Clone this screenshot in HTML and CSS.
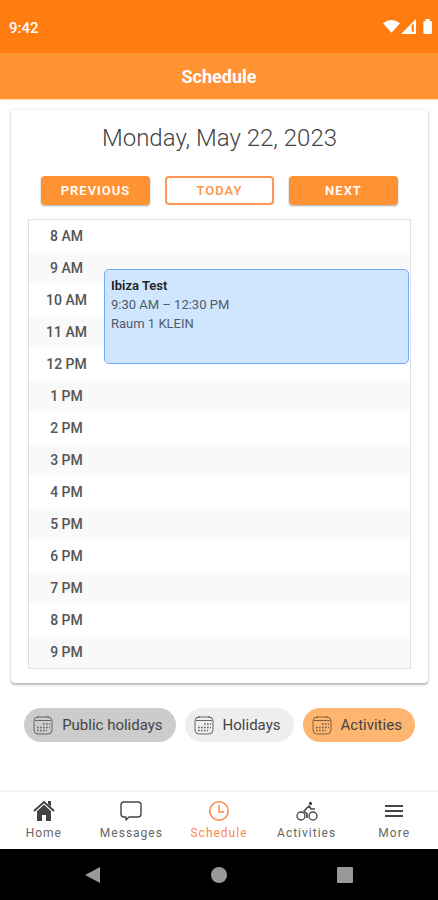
FILE: index.html
```html
<!DOCTYPE html>
<html lang="en">
<head>
<meta charset="utf-8">
<meta name="viewport" content="width=device-width, initial-scale=1">
<title>Schedule</title>
<link rel="stylesheet" href="styles.css">
</head>
<body>
<svg class="defs" aria-hidden="true">
  <symbol id="calendar" viewBox="0 0 20 20">
    <rect x="1" y="2" width="18" height="17" rx="4" fill="none" stroke="currentColor"/>
    <path d="M2 5.500h16M5 1v2M15 1v2" fill="none" stroke="currentColor"/>
    <path d="M10 9h7M4 12.500h13M4 15.500h10" fill="none" stroke="currentColor" stroke-width="1.500" stroke-dasharray="1.700 1.300"/>
  </symbol>
</svg>
<div class="status">
  <time>9:42</time>
  <svg class="signals" viewBox="0 0 48 16" aria-hidden="true">
    <path d="M0 4Q8-2 16 4L8 13Z" fill="#fff"/>
    <path d="M17 14L31 0V14Z" fill="#fff"/>
    <path d="M27 6l2-2v8h-2z" fill="#ff7c10"/>
    <path d="M38 2h2V0h4v2h2v11q0 1-1 1h-6q-1 0-1-1z" fill="#fff"/>
  </svg>
</div>
<header class="toolbar"><h1>Schedule</h1></header>
<main class="content">
  <section class="card">
    <h2>Monday, May 22, 2023</h2>
    <div class="actions">
      <button type="button">PREVIOUS</button>
      <button type="button" class="outline">TODAY</button>
      <button type="button">NEXT</button>
    </div>
    <div class="calendar">
      <table>
        <tbody>
          <tr><th scope="row">8 AM</th><td></td></tr>
          <tr><th scope="row">9 AM</th><td></td></tr>
          <tr><th scope="row">10 AM</th><td></td></tr>
          <tr><th scope="row">11 AM</th><td></td></tr>
          <tr><th scope="row">12 PM</th><td></td></tr>
          <tr><th scope="row">1 PM</th><td></td></tr>
          <tr><th scope="row">2 PM</th><td></td></tr>
          <tr><th scope="row">3 PM</th><td></td></tr>
          <tr><th scope="row">4 PM</th><td></td></tr>
          <tr><th scope="row">5 PM</th><td></td></tr>
          <tr><th scope="row">6 PM</th><td></td></tr>
          <tr><th scope="row">7 PM</th><td></td></tr>
          <tr><th scope="row">8 PM</th><td></td></tr>
          <tr><th scope="row">9 PM</th><td></td></tr>
        </tbody>
      </table>
      <article class="event">
        <h3>Ibiza Test</h3>
        <p>9:30 AM – 12:30 PM</p>
        <p>Raum 1 KLEIN</p>
      </article>
    </div>
  </section>
  <div class="chips">
    <button type="button" class="chip public"><svg aria-hidden="true"><use href="#calendar"/></svg>Public holidays</button>
    <button type="button" class="chip"><svg aria-hidden="true"><use href="#calendar"/></svg>Holidays</button>
    <button type="button" class="chip activities"><svg aria-hidden="true"><use href="#calendar"/></svg>Activities</button>
  </div>
</main>
<nav class="tabs">
  <a href="#home">
    <svg viewBox="0 0 22 22" aria-hidden="true">
      <path d="M4 11l7-7 7 7v10h-5v-6H9v6H4z" fill="currentColor"/>
      <path d="M1 11L11 2l10 9" fill="none" stroke="#fff" stroke-width="4"/>
      <path d="M15 1h3v6l-3-3z" fill="currentColor"/>
      <path d="M1 11L11 2l10 9" fill="none" stroke="currentColor" stroke-width="2"/>
    </svg>Home</a>
  <a href="#messages">
    <svg viewBox="0 0 22 22" aria-hidden="true">
      <path d="M4 2h14q3 0 3 3v9q0 3-3 3H9l-3 3v-3H4q-3 0-3-3V5q0-3 3-3z" fill="none" stroke="currentColor" stroke-width="1.4" stroke-linejoin="round"/>
    </svg>Messages</a>
  <a href="#schedule" class="active" aria-current="page">
    <svg viewBox="0 0 22 22" aria-hidden="true">
      <circle cx="11" cy="11" r="9.2" fill="none" stroke="currentColor" stroke-width="1.5"/>
      <path d="M11 5v7h5" fill="none" stroke="currentColor" stroke-width="1.4"/>
    </svg>Schedule</a>
  <a href="#activities">
    <svg viewBox="0 0 22 22" aria-hidden="true">
      <g fill="none" stroke="currentColor">
        <circle cx="5" cy="16" r="4" stroke-width="1.3"/>
        <circle cx="17" cy="16" r="4" stroke-width="1.3"/>
        <path d="M11 18v-4l-3-3 5-5 2 3h4" stroke-width="1.6" stroke-linejoin="round"/>
      </g>
      <circle cx="14.500" cy="3.500" r="1.700" fill="currentColor"/>
    </svg>Activities</a>
  <a href="#more">
    <svg viewBox="0 0 22 22" aria-hidden="true">
      <path d="M2 6h18M2 11h18M2 16h18" stroke="currentColor" stroke-width="2"/>
    </svg>More</a>
</nav>
<div class="system">
  <button type="button" aria-label="Back"><svg viewBox="0 0 18 18"><path d="M1 9L16 1v16z"/></svg></button>
  <button type="button" aria-label="Home screen"><svg viewBox="0 0 18 18"><circle cx="9" cy="9" r="8"/></svg></button>
  <button type="button" aria-label="Recent apps"><svg viewBox="0 0 18 18"><rect x="1" y="1" width="16" height="16" rx="1"/></svg></button>
</div>
</body>
</html>
```
FILE: styles.css
```css
* { box-sizing: border-box; }

body {
  display: flex;
  flex-direction: column;
  min-height: 100vh;
  margin: 0;
  background: #fff;
  color: #444;
  font-family: Roboto, sans-serif;
}

h1, h2, h3, p { margin: 0; }
button { border: 0; font-family: inherit; }
.defs { display: none; }

.status {
  display: flex;
  align-items: center;
  justify-content: space-between;
  height: 53px;
  padding: 2px 4px 0 9px;
  background: #ff7c10;
  color: #fff;
  font-size: 15px;
  font-weight: 500;
}
.signals { width: 51px; height: 17px; }

.toolbar {
  display: flex;
  align-items: center;
  justify-content: center;
  height: 46px;
  background: #ff9233;
  color: #fff;
  box-shadow: 0 1px 1px #ffdcbc;
}
.toolbar h1 { font-size: 18px; font-weight: 700; }

.content { flex: 1; padding: 11px 10px 0 11px; }

.card {
  padding: 12px 17px 14px;
  border-radius: 0 0 4px 4px;
  box-shadow: 0 2px 2px #bbb, 0 0 3px #ddd;
}
.card h2 {
  color: #444;
  font-size: 24px;
  font-weight: 300;
  line-height: 32px;
  text-align: center;
}

.actions {
  display: grid;
  grid-template-columns: repeat(3, 1fr);
  gap: 15px;
  padding: 22px 13px 14px;
}
.actions button {
  height: 29px;
  padding: 0;
  border-radius: 4px;
  background: #ff9233;
  box-shadow: 0 1px 2px #aaa;
  color: #fff;
  font-size: 13px;
  font-weight: 600;
  letter-spacing: 1px;
}
.actions .outline {
  border: 2px solid #ff9654;
  background: #fff;
  box-shadow: none;
  color: #ff9654;
}

.calendar { position: relative; border: 1px solid #e0e0e0; }
.calendar table { width: 100%; border-collapse: collapse; }
.calendar tr:nth-child(even) { background: #f9f9f9; }
.calendar th, .calendar td { height: 32px; padding: 0; }
.calendar th {
  width: 75px;
  color: #555;
  font-size: 14px;
  font-weight: 500;
  line-height: 32px;
}

.event {
  position: absolute;
  top: 49px;
  right: 1px;
  left: 75px;
  height: 95px;
  padding: 6px;
  border: 1px solid #6faaff;
  border-radius: 5px;
  background: #d0e6ff;
  color: #505b68;
  font-size: 13px;
  line-height: 19px;
}
.event h3 { color: #222; font-size: 13px; font-weight: 600; }

.chips { display: flex; justify-content: center; gap: 9px; padding: 25px 0; }
.chip {
  display: flex;
  align-items: center;
  gap: 9px;
  height: 34px;
  padding: 0 13px 0 9px;
  border-radius: 17px;
  background: #eee;
  color: #444;
  font-size: 15px;
}
.chip svg { width: 20px; height: 20px; color: #666; }
.public { background: #ccc; }
.activities { background: #fdb570; }
.activities svg { color: #80603c; }

.tabs {
  display: grid;
  grid-template-columns: repeat(5, 1fr);
  height: 59px;
  border-top: 2px solid #f4f4f4;
}
.tabs a {
  display: flex;
  flex-direction: column;
  align-items: center;
  gap: 3px;
  padding-top: 8px;
  color: #666;
  font-size: 12px;
  letter-spacing: 1px;
  line-height: 16px;
  text-decoration: none;
}
.tabs svg { width: 22px; height: 22px; color: #444; }
.tabs .active, .tabs .active svg { color: #ff8548; }

.system {
  display: flex;
  align-items: center;
  justify-content: center;
  gap: 108px;
  height: 51px;
  background: #000;
}
.system button { width: 18px; height: 18px; padding: 0; background: none; }
.system svg { display: block; width: 18px; height: 18px; fill: #999; }
```
